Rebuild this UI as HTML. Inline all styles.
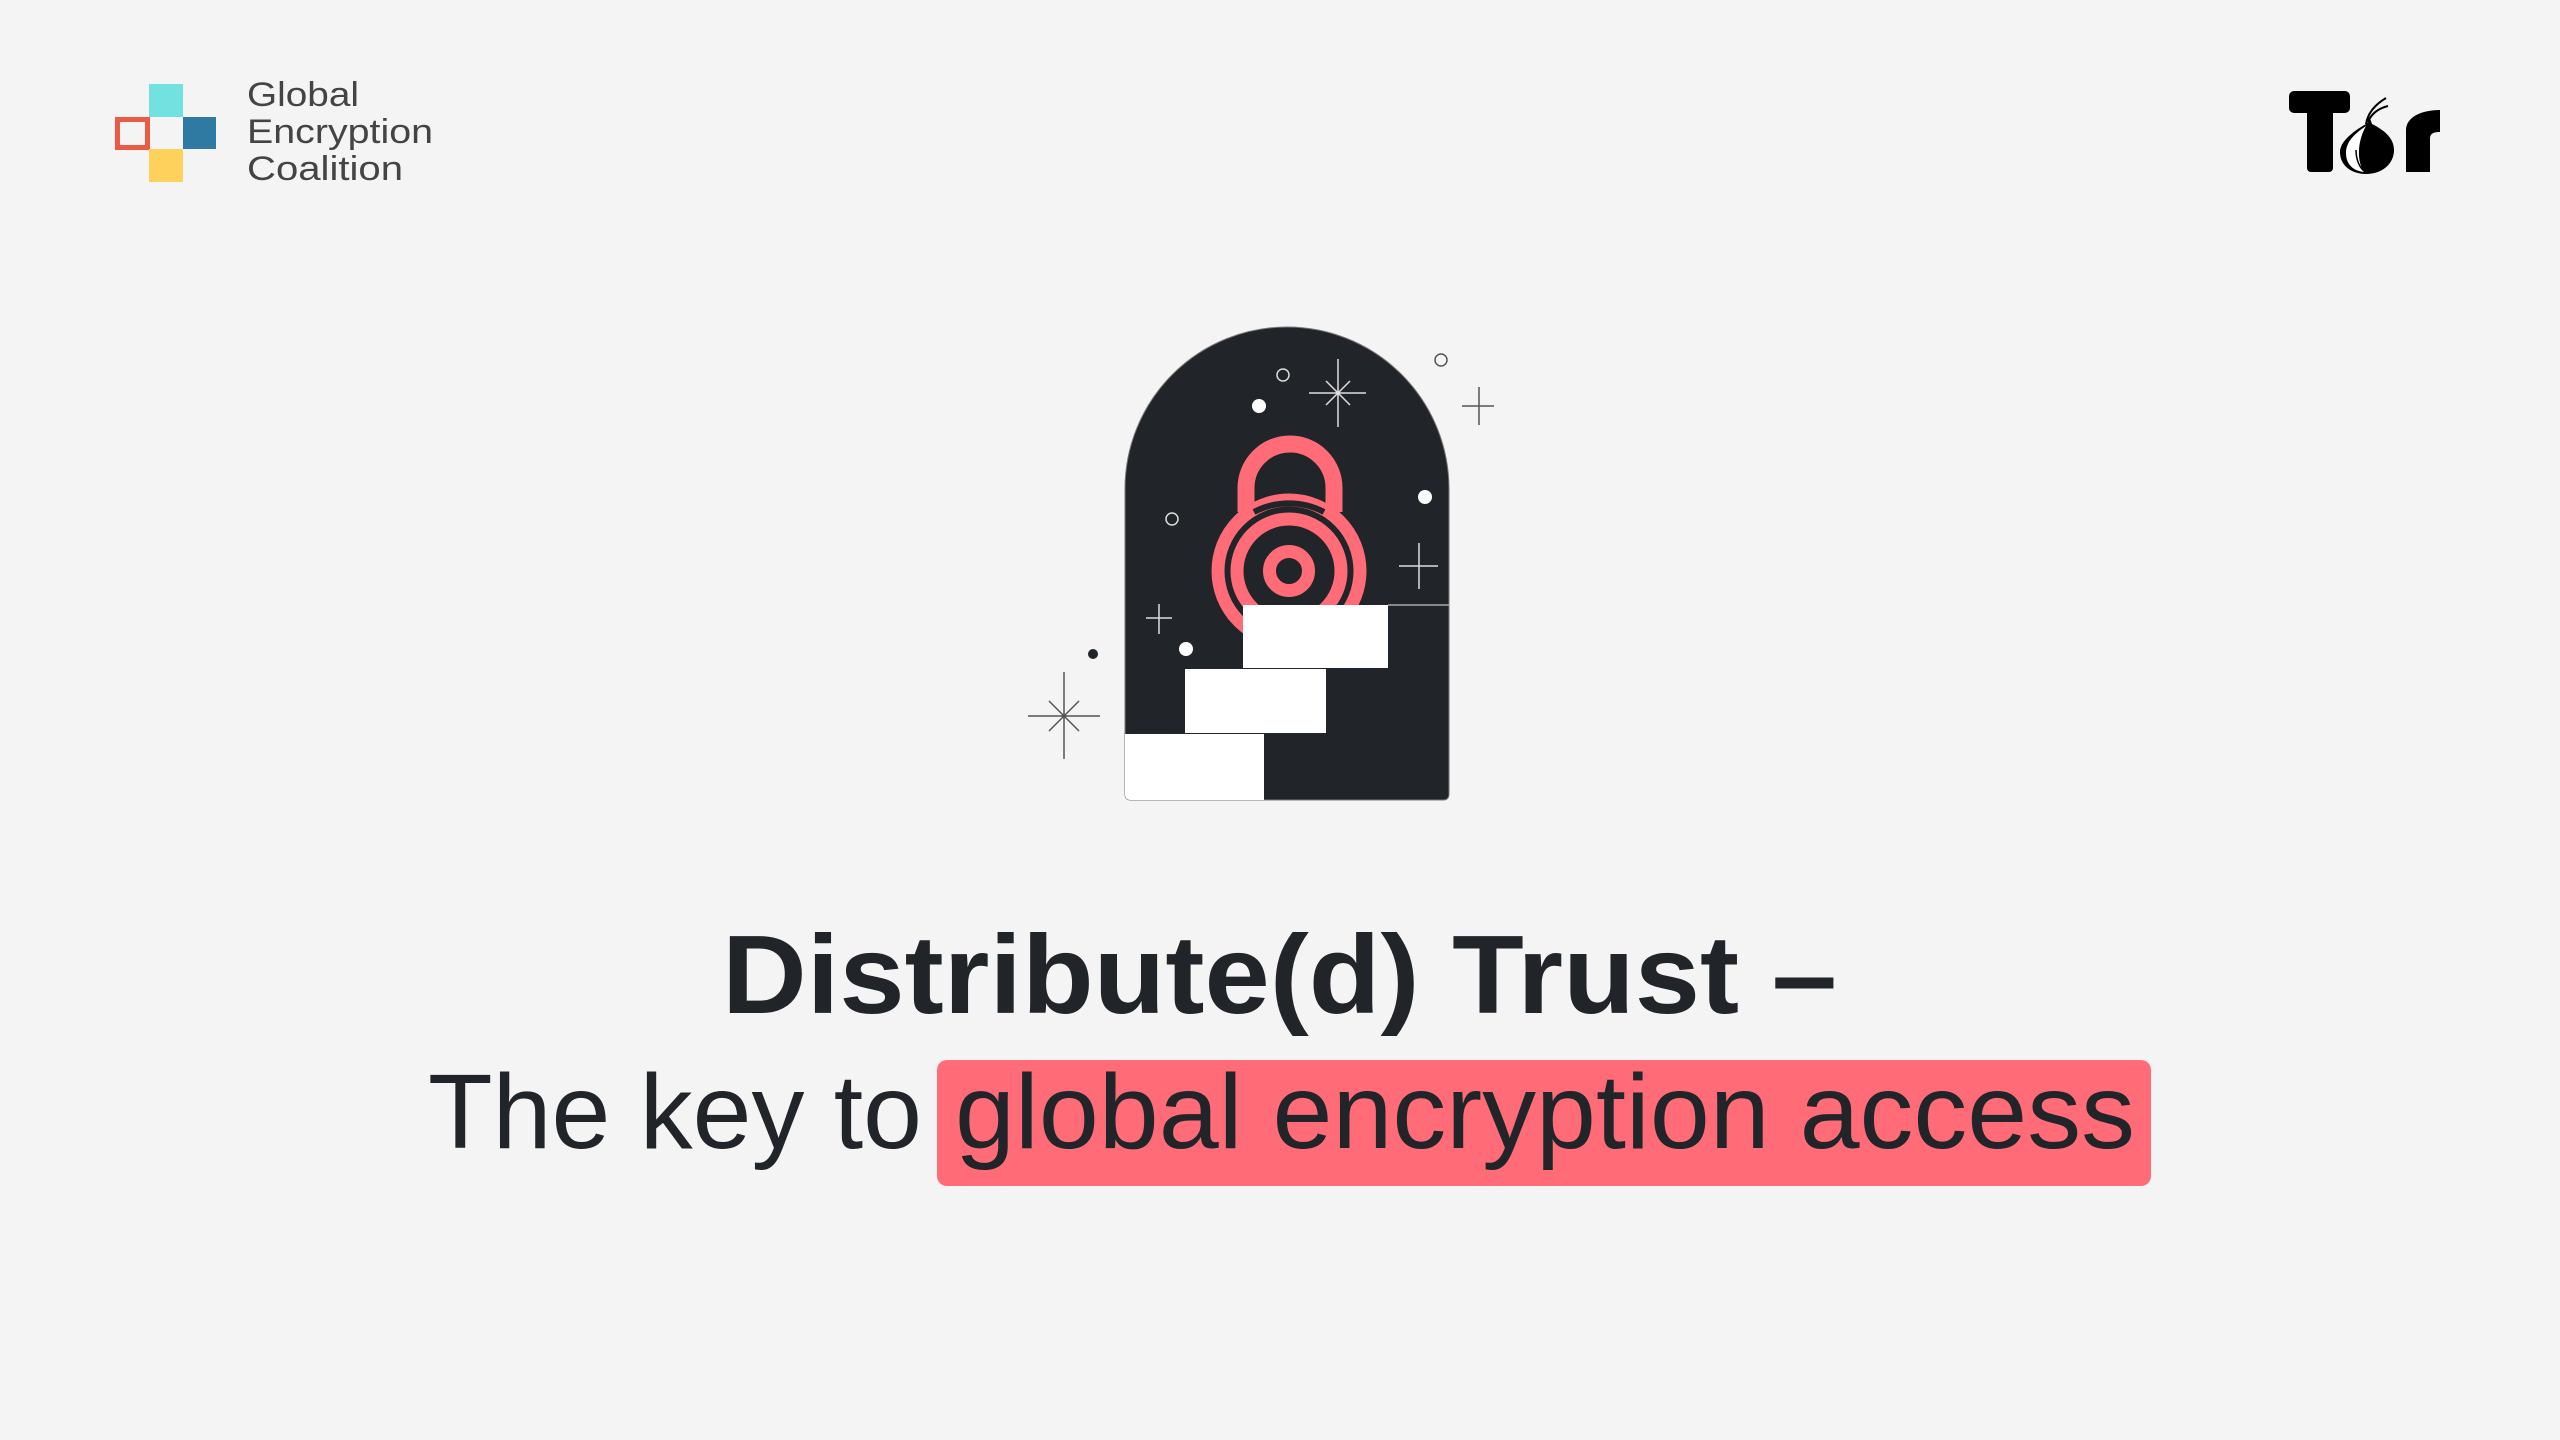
<!DOCTYPE html>
<html><head><meta charset="utf-8"><style>
html,body{margin:0;padding:0;background:#f4f4f4;width:2560px;height:1440px;overflow:hidden}
</style></head><body>
<svg width="2560" height="1440" viewBox="0 0 2560 1440" xmlns="http://www.w3.org/2000/svg" style="position:absolute;left:0;top:0">
<rect x="149" y="84" width="34" height="33" fill="#72e2e0"/>
<rect x="117.5" y="119.5" width="30" height="28" fill="none" stroke="#ec5a45" stroke-width="5"/>
<rect x="183" y="117" width="33" height="32" fill="#2f7aa2"/>
<rect x="149" y="149" width="34" height="33" fill="#fed25a"/>
<g font-family="Liberation Sans, sans-serif" font-size="34" fill="#444">
<text x="247" y="106" textLength="112" lengthAdjust="spacingAndGlyphs">Global</text>
<text x="247" y="143" textLength="186" lengthAdjust="spacingAndGlyphs">Encryption</text>
<text x="247" y="180" textLength="156" lengthAdjust="spacingAndGlyphs">Coalition</text>
</g>
<rect x="2289" y="91" width="61" height="22" rx="5" fill="#000"/>
<rect x="2307" y="91" width="26" height="81" rx="4" fill="#000"/>
<path d="M2368 112 C2372 120 2366 124 2366 124 C2352 132 2340 142 2340 152 C2340 166 2352 174 2366 174 C2382 174 2394 164 2394 150 C2394 138 2384 130 2372 124 Z" fill="#000"/>
<path d="M2366 126 C2354 134 2346 142 2346 153 C2346 165 2354 171 2364 172 C2356 160 2358 140 2366 126 Z" fill="#fff"/>
<path d="M2356 150 C2356 160 2360 168 2364 171 M2362 140 C2362 152 2364 164 2366 172" stroke="#000" stroke-width="1.5" fill="none"/>
<path d="M2366 124 C2368 112 2376 104 2386 98 M2368 122 C2372 112 2380 108 2388 106" stroke="#000" stroke-width="2" fill="none"/>
<path d="M2406 172 L2406 130 C2406 118 2420 110 2440 110 L2440 132 C2430 132 2430 136 2430 140 L2430 172 Z" fill="#000"/>
<path d="M1125 489 A162 162 0 0 1 1449 489 L1449 794 Q1449 800 1443 800 L1131 800 Q1125 800 1125 794 Z" fill="#212428" stroke="#777" stroke-width="1"/>
<g fill="none" stroke="#ff6b76">
<path d="M1246 512 L1246 488 A43 43 0 0 1 1334 488 L1334 512" stroke-width="17"/>
<circle cx="1289" cy="571" r="71" stroke-width="13"/>
<circle cx="1289" cy="571" r="52" stroke-width="13"/>
<circle cx="1289" cy="571" r="19.5" stroke-width="13"/>
</g>
<path d="M1254 512 A75 75 0 0 1 1324 512" fill="none" stroke="#212428" stroke-width="6"/>
<rect x="1243" y="605" width="145" height="63" fill="#fff"/>
<line x1="1388" y1="605" x2="1449" y2="605" stroke="#aaa" stroke-width="1.5"/>
<rect x="1185" y="669" width="141" height="64" fill="#fff"/>
<path d="M1125 734 L1264 734 L1264 800 L1131 800 Q1125 800 1125 794 Z" fill="#fff"/>
<g fill="none" stroke="#ddd" stroke-width="1.5">
<circle cx="1283" cy="375" r="6"/>
<circle cx="1172" cy="519" r="6"/>
<path d="M1338 359 V427 M1309 393 H1366 M1326 381 L1350 405 M1350 381 L1326 405"/>
<path d="M1419 543 V589 M1399 566 H1438"/>
<path d="M1159 604 V634 M1146 618 H1172"/>
</g>
<g fill="none" stroke="#555" stroke-width="1.5">
<circle cx="1441" cy="360" r="6"/>
<path d="M1479 387 V425 M1462 406 H1494"/>
<path d="M1064 672 V759 M1028 716 H1100 M1049 701 L1079 731 M1079 701 L1049 731"/>
</g>
<g fill="#fff">
<circle cx="1259" cy="406" r="7"/>
<circle cx="1425" cy="497" r="7"/>
<circle cx="1186" cy="649" r="7"/>
</g>
<circle cx="1093" cy="654" r="5" fill="#212428"/>
<text x="722" y="1013" font-family="Liberation Sans, sans-serif" font-weight="bold" font-size="111" fill="#212428" textLength="1115" lengthAdjust="spacingAndGlyphs">Distribute(d) Trust –</text>
<rect x="937" y="1060" width="1214" height="126" rx="10" fill="#ff6b76"/>
<g font-family="Liberation Sans, sans-serif" font-size="106" fill="#212428">
<text x="428" y="1148" textLength="494" lengthAdjust="spacingAndGlyphs">The key to</text>
<text x="955" y="1148" textLength="1180" lengthAdjust="spacingAndGlyphs">global encryption access</text>
</g>
</svg>
</body></html>
